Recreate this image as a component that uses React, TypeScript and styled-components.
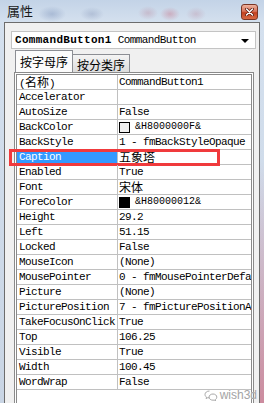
import React from 'react'
import styled, { createGlobalStyle } from 'styled-components'

interface PropRow {
  name: React.ReactNode
  value?: React.ReactNode
  swatch?: string
  selected?: boolean
}

const App: React.FC = () => {
  const cjk = (t: string) => <Cjk>{t}</Cjk>

  const rows: PropRow[] = [
    { name: <>({cjk('名称')})</>, value: 'CommandButton1' },
    { name: 'Accelerator' },
    { name: 'AutoSize', value: 'False' },
    { name: 'BackColor', swatch: '#f0f0f0', value: '&H8000000F&' },
    { name: 'BackStyle', value: '1 - fmBackStyleOpaque' },
    { name: 'Caption', value: cjk('五象塔'), selected: true },
    { name: 'Enabled', value: 'True' },
    { name: 'Font', value: cjk('宋体') },
    { name: 'ForeColor', swatch: '#000000', value: '&H80000012&' },
    { name: 'Height', value: '29.2' },
    { name: 'Left', value: '51.15' },
    { name: 'Locked', value: 'False' },
    { name: 'MouseIcon', value: '(None)' },
    { name: 'MousePointer', value: '0 - fmMousePointerDefault' },
    { name: 'Picture', value: '(None)' },
    { name: 'PicturePosition', value: '7 - fmPicturePositionAboveCenter' },
    { name: 'TakeFocusOnClick', value: 'True' },
    { name: 'Top', value: '106.25' },
    { name: 'Visible', value: 'True' },
    { name: 'Width', value: '100.45' },
    { name: 'WordWrap', value: 'False' },
  ]

  return (
    <Window>
      <GlobalStyle />
      <TitleBar>
        <Title>属性</Title>
        <CloseButton>
          <svg width='9' height='8' viewBox='0 0 9 8'>
            <path d='M1.5 1L7.5 7M7.5 1L1.5 7' stroke='#5a1a10' strokeWidth='3' strokeLinecap='round' />
            <path d='M1.5 1L7.5 7M7.5 1L1.5 7' stroke='#ffffff' strokeWidth='1.5' strokeLinecap='round' />
          </svg>
        </CloseButton>
      </TitleBar>

      <Panel>
        <Combo>
          <ComboBold>CommandButton1</ComboBold>
          <ComboText>CommandButton</ComboText>
          <ComboArrow />
        </Combo>

        <Tabs>
          <Tab $active>按字母序</Tab>
          <Tab>按分类序</Tab>
        </Tabs>

        <Grid>
          {rows.map((r, i) => (
            <Row key={i}>
              <NameCell $selected={r.selected}>{r.name}</NameCell>
              <ValueCell>
                {r.swatch && <Swatch $color={r.swatch} />}
                {r.swatch ? <SmallText>{r.value}</SmallText> : r.value}
              </ValueCell>
              {r.selected && <Highlight />}
            </Row>
          ))}
        </Grid>
      </Panel>

      <Watermark>
        <svg width='14' height='11' viewBox='0 0 14 11' fill='none' stroke='#a8a8a8' strokeWidth='1'>
          <path d='M5.5 1C2.9 1 1 2.6 1 4.5c0 1.1.6 2 1.5 2.7L2.1 8.6l1.7-.9c.5.1 1.1.2 1.7.2' />
          <path d='M9 4c-2.2 0-4 1.4-4 3.1S6.8 10.2 9 10.2c.4 0 .8 0 1.2-.1l1.4.8-.3-1.2c.9-.6 1.5-1.5 1.5-2.5C12.9 5.4 11.2 4 9 4z' />
        </svg>
        <WatermarkText>wish3d</WatermarkText>
      </Watermark>
    </Window>
  )
}

const GlobalStyle = createGlobalStyle`
  html, body {
    margin: 0;
    padding: 0;
  }
  body {
    width: 264px;
    height: 403px;
    overflow: hidden;
    background: #c8d6e8;
  }
`

const Window = styled.div`
  position: relative;
  width: 264px;
  height: 403px;
  display: flex;
  flex-direction: column;
  overflow: hidden;
  background:
    radial-gradient(ellipse 14px 8px at 52px 14px, rgba(140, 160, 195, 0.55), transparent),
    radial-gradient(ellipse 12px 7px at 92px 14px, rgba(150, 165, 195, 0.5), transparent),
    radial-gradient(ellipse 10px 7px at 148px 13px, rgba(190, 150, 170, 0.45), transparent),
    radial-gradient(ellipse 10px 7px at 170px 14px, rgba(200, 130, 150, 0.5), transparent),
    radial-gradient(ellipse 10px 7px at 196px 14px, rgba(190, 150, 170, 0.4), transparent),
    linear-gradient(to bottom, rgba(215, 160, 175, 0) 40%, rgba(205, 115, 135, 0.75) 100%) right top / 5px 100% no-repeat,
    linear-gradient(to bottom, #c3d3e7 0, #d4e0ee 22px, #c9d5e4 100%);
`

const TitleBar = styled.div`
  height: 22px;
  flex: none;
  display: flex;
  align-items: center;
  justify-content: space-between;
  padding: 0 6px 0 7px;
`

const Title = styled.span`
  font-family: 'Noto Sans CJK SC', sans-serif;
  font-size: 13px;
  line-height: 16px;
  color: #1a1a1a;
`

const CloseButton = styled.div`
  width: 17px;
  height: 16px;
  box-sizing: border-box;
  display: flex;
  align-items: center;
  justify-content: center;
  border: 1px solid #7a3525;
  border-radius: 3px;
  background: linear-gradient(to bottom, #eeb3a0 0%, #d8735a 45%, #c2401f 55%, #d86a44 100%);
  margin-top: 2px;
`

const Panel = styled.div`
  flex: 1;
  display: flex;
  flex-direction: column;
  margin: 0 4px;
  border: 1px solid #6c6c6c;
  border-bottom: none;
  background: #f0f0f0;
  min-height: 0;
`

const Combo = styled.div`
  height: 18px;
  margin: 8px 3px 0 6px;
  box-sizing: border-box;
  border: 1px solid #c4c4c4;
  background: #ffffff;
  display: flex;
  align-items: center;
  padding-left: 3px;
  font-family: 'Liberation Mono', monospace;
  font-size: 11px;
  color: #000;
  white-space: nowrap;
`

const ComboBold = styled.span`
  font-weight: bold;
  letter-spacing: 0.3px;
  margin-right: 6px;
`

const ComboText = styled.span`
  letter-spacing: -0.6px;
  flex: 1;
`

const ComboArrow = styled.span`
  width: 0;
  height: 0;
  border-left: 4px solid transparent;
  border-right: 4px solid transparent;
  border-top: 4px solid #000;
  margin-right: 6px;
  margin-top: 2px;
`

const Tabs = styled.div`
  height: 22px;
  margin-top: 1px;
  padding-left: 10px;
  display: flex;
  align-items: flex-end;
`

const Tab = styled.div<{ $active?: boolean }>`
  position: relative;
  z-index: ${(p) => (p.$active ? 1 : 0)};
  width: 58px;
  height: ${(p) => (p.$active ? '22px' : '18px')};
  margin-left: ${(p) => (p.$active ? '0' : '-1px')};
  box-sizing: border-box;
  border: 1px solid #8c8e94;
  border-bottom: none;
  background: ${(p) => (p.$active ? '#fbfbfb' : 'linear-gradient(to bottom, #f4f4f4, #dcdcdc)')};
  display: flex;
  align-items: center;
  justify-content: center;
  font-family: 'Noto Sans CJK SC', sans-serif;
  font-size: 12px;
  color: #000;
  padding-top: ${(p) => (p.$active ? '0' : '1px')};
`

const Grid = styled.div`
  flex: 1;
  margin-left: 9px;
  width: 240px;
  box-sizing: border-box;
  border: 3px double #8a8a8a;
  border-bottom: none;
  background: #ffffff;
  font-family: 'Liberation Mono', 'Noto Sans CJK SC', monospace;
  font-size: 11px;
  letter-spacing: -0.6px;
  color: #000;
`

const Row = styled.div`
  position: relative;
  display: grid;
  grid-template-columns: 101px minmax(0, 1fr);
  height: 15px;
`

const NameCell = styled.div<{ $selected?: boolean }>`
  box-sizing: border-box;
  height: 15px;
  line-height: 14px;
  padding-left: 2px;
  border-right: 1px solid #c0c0c0;
  border-bottom: 1px solid #c0c0c0;
  white-space: nowrap;
  overflow-x: clip;
  overflow-y: visible;
  background: ${(p) => (p.$selected ? '#3399ff' : 'transparent')};
  color: ${(p) => (p.$selected ? '#ffffff' : '#000000')};
`

const ValueCell = styled.div`
  box-sizing: border-box;
  min-width: 0;
  height: 15px;
  line-height: 14px;
  padding-left: 1px;
  border-bottom: 1px solid #c0c0c0;
  white-space: nowrap;
  overflow-x: clip;
  overflow-y: visible;
  display: flex;
  align-items: center;
`

const Cjk = styled.span`
  font-family: 'Noto Sans CJK SC', sans-serif;
  font-size: 12px;
  line-height: 14px;
  letter-spacing: 0;
`

const Swatch = styled.span<{ $color: string }>`
  flex: none;
  width: 11px;
  height: 11px;
  box-sizing: border-box;
  border: 1px solid #000;
  background: ${(p) => p.$color};
  margin-right: 5px;
`

const SmallText = styled.span`
  font-size: 10px;
  letter-spacing: 0;
`

const Highlight = styled.div`
  position: absolute;
  left: -8px;
  top: -1px;
  width: 211px;
  height: 17px;
  box-sizing: border-box;
  border: 3px solid #f03a3c;
  pointer-events: none;
`

const Watermark = styled.div`
  position: absolute;
  right: 7px;
  bottom: 1px;
  display: flex;
  align-items: center;
  gap: 2px;
`

const WatermarkText = styled.span`
  font-family: 'Liberation Sans', sans-serif;
  font-size: 12px;
  color: #a4a4a4;
  text-shadow: 0 0 1px #ffffff;
`

export default App
